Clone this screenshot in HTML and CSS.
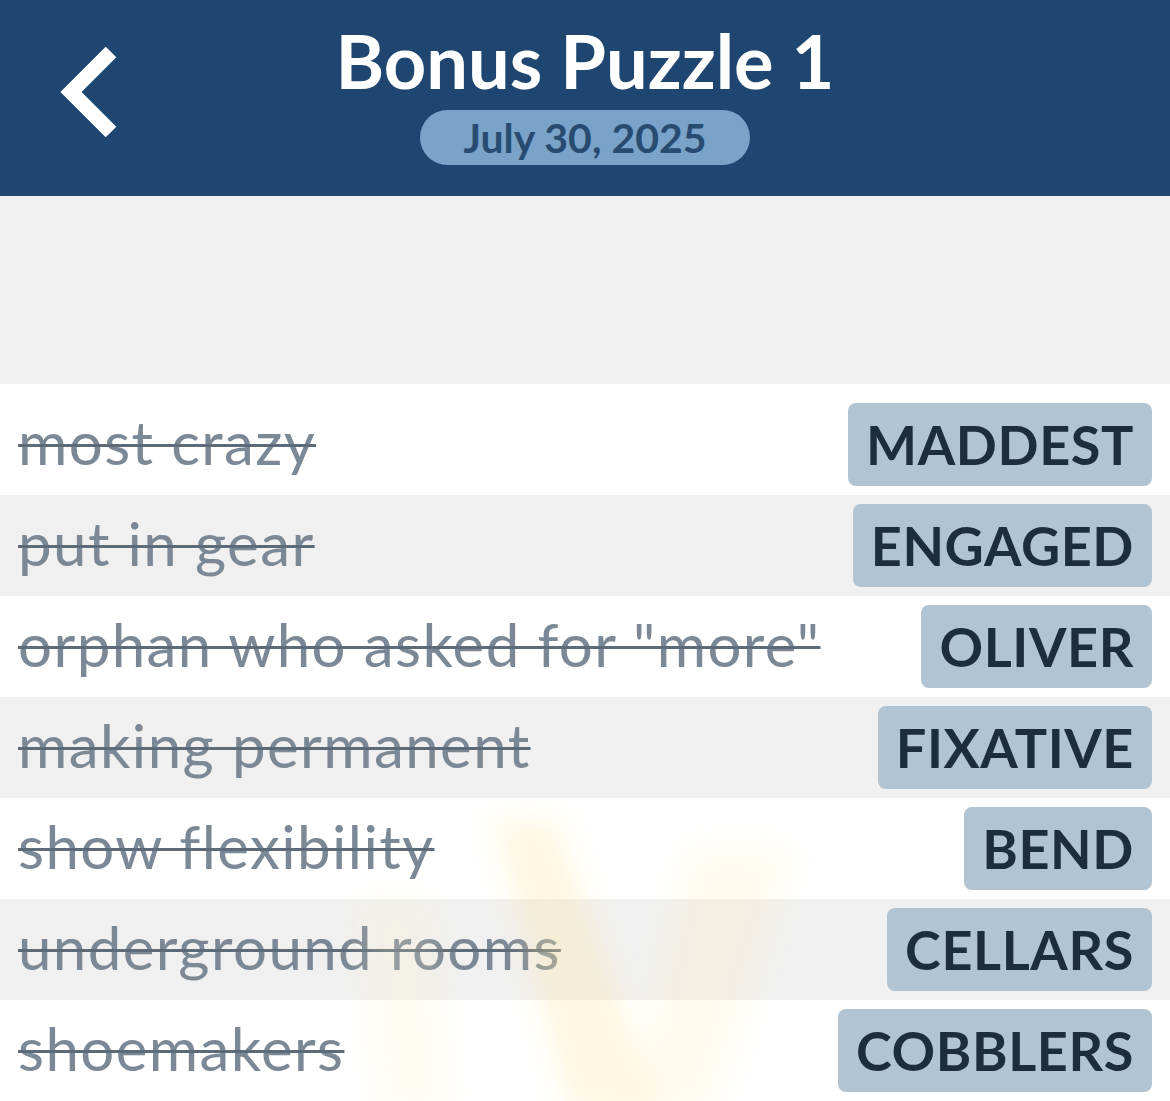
FILE: index.html
```html
<!DOCTYPE html>
<html lang="en">
<head>
  <meta charset="UTF-8">
  <meta name="viewport" content="width=device-width, initial-scale=1.0">
  <title>Bonus Puzzle 1</title>
  <link rel="stylesheet" href="styles.css">
</head>
<body>
  <header class="top-bar">
    <a class="back" href="#" aria-label="Back">
      <svg width="60" height="90" viewBox="0 0 60 90">
        <polyline points="53,5 13,45 53,85" fill="none" stroke="#fff" stroke-width="15" stroke-linejoin="miter"/>
      </svg>
    </a>
    <div class="title-block">
      <h1>Bonus Puzzle 1</h1>
      <span class="date-pill">July 30, 2025</span>
    </div>
  </header>

  <div class="spacer"></div>

  <ul class="clues">
    <li class="clue"><span class="hint">most crazy</span><span class="answer">MADDEST</span></li>
    <li class="clue"><span class="hint">put in gear</span><span class="answer">ENGAGED</span></li>
    <li class="clue"><span class="hint">orphan who asked for "more"</span><span class="answer">OLIVER</span></li>
    <li class="clue"><span class="hint">making permanent</span><span class="answer">FIXATIVE</span></li>
    <li class="clue"><span class="hint">show flexibility</span><span class="answer">BEND</span></li>
    <li class="clue"><span class="hint">underground rooms</span><span class="answer">CELLARS</span></li>
    <li class="clue"><span class="hint">shoemakers</span><span class="answer">COBBLERS</span></li>

    <!-- soft light rays over the finished list -->
    <svg class="rays" width="500" height="300" viewBox="0 0 500 300">
      <defs>
        <filter id="soft" x="-50%" y="-50%" width="200%" height="200%"><feGaussianBlur stdDeviation="14"/></filter>
      </defs>
      <g filter="url(#soft)">
        <polygon points="155,20 215,20 320,310 230,310" fill="#ffe7a0" opacity=".32"/>
        <polygon points="350,50 450,50 370,310 290,310" fill="#ffeab0" opacity=".2"/>
        <polygon points="20,100 90,100 110,310 40,310" fill="#fff0c8" opacity=".2"/>
      </g>
    </svg>
  </ul>
</body>
</html>
```

FILE: styles.css
```css
* {
  box-sizing: border-box;
}
body {
  margin: 0;
  background: #f0f0f0;
  font-family: "Lato", "Open Sans", sans-serif;
}
.top-bar {
  position: relative;
  height: 196px;
  background: #1f4670;
  display: flex;
  justify-content: center;
}
.back {
  position: absolute;
  left: 58px;
  top: 47px;
  display: block;
}
.back svg {
  display: block;
}
.title-block {
  display: flex;
  flex-direction: column;
  align-items: center;
  padding-top: 20px;
}
h1 {
  margin: 0;
  color: #fff;
  font-size: 74px;
  font-weight: 700;
  line-height: 82px;
}
.date-pill {
  margin-top: 8px;
  width: 330px;
  height: 55px;
  border-radius: 28px;
  background: #79a3c8;
  color: #284b72;
  font-size: 41px;
  font-weight: 700;
  display: flex;
  align-items: center;
  justify-content: center;
}
.spacer {
  height: 188px;
}
.clues {
  position: relative;
  list-style: none;
  margin: 0;
  padding: 10px 0 0;
  background: #fff;
  overflow: hidden;
}
.clue {
  height: 101px;
  padding: 0 18px;
  display: flex;
  align-items: center;
  justify-content: space-between;
}
.clue:nth-child(even) {
  background: #f0f0f0;
}
.hint {
  color: #7b8895;
  font-size: 60px;
  line-height: 1;
  margin-top: -6px;
  letter-spacing: 1.4px;
  text-decoration: line-through;
  text-decoration-color: #5d6b79;
  text-decoration-thickness: 3px;
  white-space: nowrap;
}
.answer {
  height: 83px;
  padding: 0 18px;
  border-radius: 8px;
  background: #b1c4d3;
  color: #1c2d3e;
  font-size: 54px;
  font-weight: 700;
  letter-spacing: 0.6px;
  display: flex;
  align-items: center;
}
.rays {
  position: absolute;
  left: 340px;
  bottom: 0;
  pointer-events: none;
}
```
